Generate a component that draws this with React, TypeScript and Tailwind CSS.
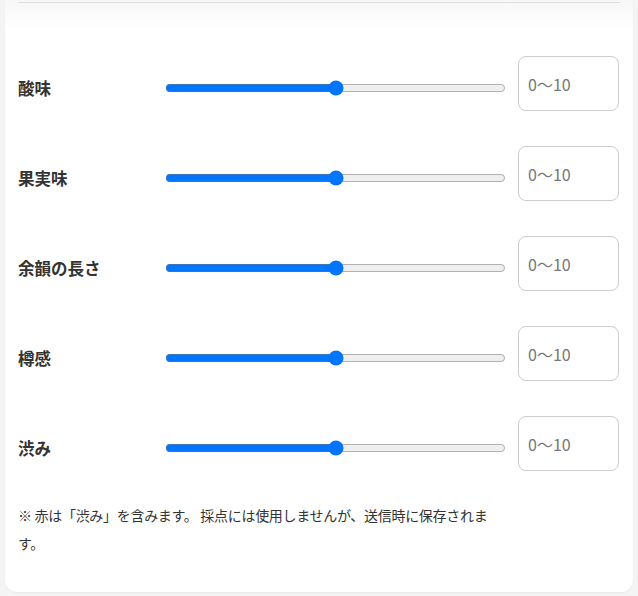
import React from "react";

const rows = ["酸味", "果実味", "余韻の長さ", "樽感", "渋み"];

export default function App() {
  return (
    <div
      className="min-h-[596px] w-full bg-[#f4f4f4] px-[5px] pb-[4px]"
      style={{ fontFamily: '"Noto Sans CJK JP", "Noto Sans", sans-serif' }}
    >
      <div className="rounded-b-[12px] bg-white px-[13px] pb-[35px] shadow-[0_1px_2px_rgba(0,0,0,0.05)]">
        <div className="-mx-[13px] h-[30px] bg-gradient-to-b from-[#f7f7f7] to-white px-[13px] pt-[2px]">
          <div className="h-px bg-[#dedede]" />
        </div>
        <div className="mt-[26px] flex flex-col gap-[26px]">
          {rows.map((r) => (
            <div key={r} className="flex h-[64px] items-center">
              <div className="w-[147px] text-[16.5px] font-bold text-[#333]">{r}</div>
              <input
                type="range"
                min={0}
                max={10}
                defaultValue={5}
                className="w-[341px] accent-[#0075ff]"
              />
              <div className="ml-[12px] self-start">
                <input
                  type="text"
                  placeholder="0〜10"
                  className="h-[55px] w-[101px] rounded-[8px] border border-[#cccccc] bg-white px-[9px] text-[16px] text-[#333] placeholder:text-[#777] outline-none"
                />
              </div>
            </div>
          ))}
        </div>
        <p className="mt-[21px] w-[480px] text-[14px] tracking-[-0.3px] leading-[28px] text-[#333]">
          ※ 赤は「渋み」を含みます。 採点には使用しませんが、送信時に保存されます。
        </p>
      </div>
    </div>
  );
}
